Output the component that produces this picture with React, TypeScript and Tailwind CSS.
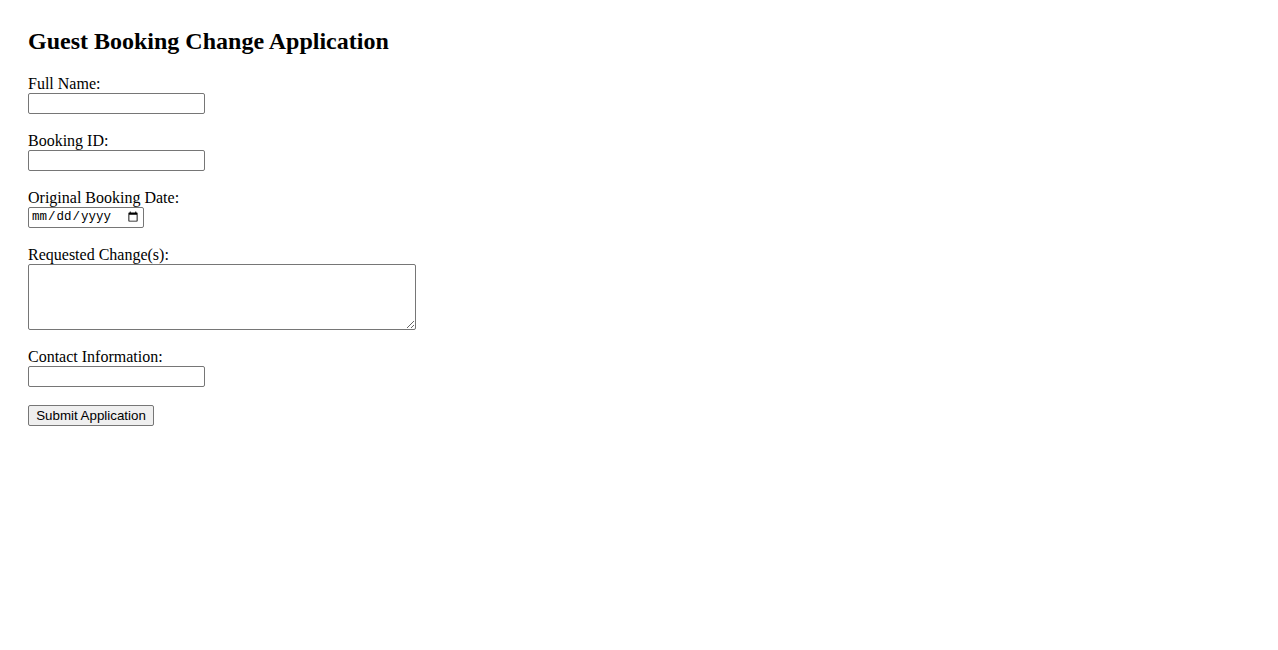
export default function App() {
  const label = "block h-[18px] text-[16px] leading-[18px] text-black";
  const field =
    "block h-[21px] w-[177px] rounded-[2px] border border-[#767676] bg-white px-[2px] py-px text-[13.33px] font-['Liberation_Sans',Arial,sans-serif]";

  return (
    <div className="min-h-[650px] bg-white px-[28px] pt-[27px] font-['Liberation_Serif','Times_New_Roman',serif] text-black">
      <h2 className="h-[28px] text-[24px] font-bold leading-[28px]">
        Guest Booking Change Application
      </h2>
      <form className="mt-[20px] flex flex-col gap-[18px]">
        <div>
          <label className={label}>Full Name:</label>
          <input type="text" className={field} />
        </div>
        <div>
          <label className={label}>Booking ID:</label>
          <input type="text" className={field} />
        </div>
        <div>
          <label className={label}>Original Booking Date:</label>
          <input
            type="date"
            className="block h-[21px] w-[116px] rounded-[2px] border border-[#767676] bg-white px-[2px] py-0 font-['Liberation_Mono',monospace] text-[12.5px] leading-[17px]"
          />
        </div>
        <div>
          <label className={label}>Requested Change(s):</label>
          <textarea className="block h-[66px] w-[388px] rounded-[2px] border border-[#767676] bg-white px-[2px] py-px font-['Liberation_Mono',monospace] text-[13.33px]" />
        </div>
        <div>
          <label className={label}>Contact Information:</label>
          <input type="text" className={field} />
        </div>
        <div>
          <button
            type="submit"
            className="block h-[21px] w-[126px] rounded-[2px] border border-[#767676] bg-[#efefef] px-[6px] py-px text-[13.33px] leading-[17px] text-black font-['Liberation_Sans',Arial,sans-serif]"
          >
            Submit Application
          </button>
        </div>
      </form>
    </div>
  );
}
